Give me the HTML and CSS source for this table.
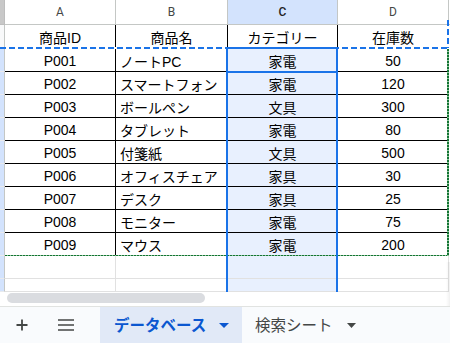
FILE: index.html
```html
<!DOCTYPE html>
<html lang="ja">
<head>
<meta charset="utf-8">
<title>データベース</title>
<link rel="stylesheet" href="styles.css">
</head>
<body>
<div class="app">
  <div class="sheet">
    <div class="grid">
      <div class="corner"></div>
      <div class="ch">A</div>
      <div class="ch">B</div>
      <div class="ch ch-sel">C</div>
      <div class="ch">D</div>
      <div class="ch ch-end"></div>

      <div class="rh rh-top"></div>
      <div class="c">商品ID</div>
      <div class="c">商品名</div>
      <div class="c">カテゴリー</div>
      <div class="c">在庫数</div>
      <div class="fill"></div>

      <div class="rh"></div><div class="c">P001</div><div class="c left">ノートPC</div><div class="c sel">家電</div><div class="c">50</div><div class="fill"></div>
      <div class="rh"></div><div class="c">P002</div><div class="c left">スマートフォン</div><div class="c sel">家電</div><div class="c">120</div><div class="fill"></div>
      <div class="rh"></div><div class="c">P003</div><div class="c left">ボールペン</div><div class="c sel">文具</div><div class="c">300</div><div class="fill"></div>
      <div class="rh"></div><div class="c">P004</div><div class="c left">タブレット</div><div class="c sel">家電</div><div class="c">80</div><div class="fill"></div>
      <div class="rh"></div><div class="c">P005</div><div class="c left">付箋紙</div><div class="c sel">文具</div><div class="c">500</div><div class="fill"></div>
      <div class="rh"></div><div class="c">P006</div><div class="c left">オフィスチェア</div><div class="c sel">家具</div><div class="c">30</div><div class="fill"></div>
      <div class="rh"></div><div class="c">P007</div><div class="c left">デスク</div><div class="c sel">家具</div><div class="c">25</div><div class="fill"></div>
      <div class="rh"></div><div class="c">P008</div><div class="c left">モニター</div><div class="c sel">家電</div><div class="c">75</div><div class="fill"></div>
      <div class="rh"></div><div class="c">P009</div><div class="c left">マウス</div><div class="c sel">家電</div><div class="c">200</div><div class="fill"></div>

      <div class="rh"></div><div class="c e"></div><div class="c e"></div><div class="c e sel"></div><div class="c e"></div><div class="fill"></div>
      <div class="rh"></div><div class="c e"></div><div class="c e"></div><div class="c e sel"></div><div class="c e"></div><div class="fill"></div>
    </div>

    <div class="marq-blue-h"></div>
    <div class="marq-blue-v"></div>
    <div class="marq-green-h"></div>
    <div class="marq-green-v"></div>
    <div class="range"></div>
    <div class="active"></div>
    <div class="edge-shadow"></div>

    <div class="hscroll"><div class="thumb"></div></div>
  </div>

  <div class="tabbar">
    <div class="tbtn">
      <svg width="12" height="12" viewBox="0 0 12 12"><path d="M6 0.5V11.5M0.5 6H11.5" stroke="#444746" stroke-width="1.8" fill="none"/></svg>
    </div>
    <div class="tbtn">
      <svg width="16" height="12" viewBox="0 0 16 12"><path d="M0 1H16M0 6H16M0 11H16" stroke="#444746" stroke-width="1.7" fill="none"/></svg>
    </div>
    <div class="tab tab-active">
      <span class="tab-label">データベース</span>
      <svg class="caret" width="10" height="5" viewBox="0 0 10 5"><polygon points="0,0 10,0 5,5" fill="#0b57d0"/></svg>
    </div>
    <div class="tab">
      <span class="tab-label">検索シート</span>
      <svg class="caret" width="9" height="5" viewBox="0 0 9 5"><polygon points="0,0 9,0 4.5,5" fill="#444746"/></svg>
    </div>
  </div>
</div>
</body>
</html>
```

FILE: styles.css
```css
html, body {
  margin: 0;
  padding: 0;
  background: #ffffff;
}

.app {
  width: 450px;
  height: 343px;
  overflow: hidden;
  display: flex;
  flex-direction: column;
  font-family: "Liberation Sans", "Noto Sans CJK JP", sans-serif;
}

.sheet {
  position: relative;
  height: 306px;
  flex: none;
  background: #ffffff;
}

.grid {
  display: grid;
  grid-template-columns: 5px 111px 112px 110px 111px 1px;
  grid-template-rows: 25px 24px repeat(10, 23px) 13px;
}

.grid > div {
  box-sizing: border-box;
}

.corner {
  background: #c8c8c8;
  border-right: 1px solid #bdbdbd;
  border-bottom: 1px solid #bdbdbd;
}

.ch {
  display: flex;
  align-items: center;
  justify-content: center;
  font-family: "Roboto", "Liberation Sans", sans-serif;
  font-size: 12px;
  color: #444746;
  background: #ffffff;
  border-right: 1px solid #c4c7c5;
  border-bottom: 1px solid #c4c7c5;
}

.ch-sel {
  background: #d3e3fd;
  color: #1f1f1f;
  font-weight: 500;
}

.ch-end {
  border-right: none;
}

.rh {
  background: #d3e3fd;
  border-right: 1px solid #c4c7c5;
  border-bottom: 1px solid #e8eaed;
}

.rh-top {
  background: #f8f9fa;
  border-bottom: 1px solid #c4c7c5;
}

.c {
  display: flex;
  align-items: center;
  justify-content: center;
  padding-top: 1px;
  font-size: 14px;
  color: #000000;
  border-right: 1px solid #000000;
  border-bottom: 1px solid #000000;
  white-space: nowrap;
  overflow: hidden;
}

.c.left {
  justify-content: flex-start;
  padding-left: 4px;
}

.c.sel {
  background: #e8f0fe;
}

.c.e {
  border-right-color: #e1e1e1;
  border-bottom-color: #e1e1e1;
}

.fill {
  background: #ffffff;
}

/* copy marquees and selection, drawn over the grid */
.marq-blue-h {
  position: absolute;
  left: 0;
  top: 47px;
  width: 449px;
  height: 2px;
  background: repeating-linear-gradient(90deg, #1a73e8 0 6px, #ffffff 6px 9px);
}

.marq-blue-v {
  position: absolute;
  left: 447px;
  top: 20px;
  width: 2px;
  height: 28px;
  background: repeating-linear-gradient(180deg, #1a73e8 0 6px, #ffffff 6px 9px);
}

.marq-green-h {
  position: absolute;
  left: 5px;
  top: 255px;
  width: 444px;
  height: 1px;
  background: repeating-linear-gradient(90deg, #137333 0 2px, #8fc79b 2px 3px);
}

.marq-green-v {
  position: absolute;
  left: 447px;
  top: 49px;
  width: 2px;
  height: 207px;
  background: repeating-linear-gradient(180deg, #137333 0 2px, #8fc79b 2px 3px);
}

.range {
  position: absolute;
  left: 226px;
  top: 47px;
  width: 112px;
  height: 245px;
  box-sizing: border-box;
  border: 2px solid #1a73e8;
  border-bottom: none;
}

.active {
  position: absolute;
  left: 226px;
  top: 47px;
  width: 112px;
  height: 26px;
  box-sizing: border-box;
  border: 2px solid #1a73e8;
}

.edge-shadow {
  position: absolute;
  right: 0;
  top: 262px;
  width: 4px;
  height: 44px;
  background: linear-gradient(90deg, rgba(0,0,0,0), rgba(0,0,0,0.06));
}

.hscroll {
  height: 14px;
  padding-top: 1px;
  padding-left: 7px;
  box-sizing: border-box;
}

.thumb {
  width: 198px;
  height: 10px;
  border-radius: 5px;
  background: #dadce0;
}

/* sheet tabs */
.tabbar {
  flex: 1;
  display: flex;
  align-items: stretch;
  background: #f9fbfd;
  border-top: 1px solid #e1e3e1;
  font-family: "Noto Sans CJK JP", sans-serif;
}

.tbtn {
  width: 44px;
  display: flex;
  align-items: center;
  justify-content: center;
}

.tbtn + .tab {
  margin-left: 12px;
}

.tab {
  display: flex;
  align-items: center;
  padding: 0 12px 0 13px;
  gap: 14px;
  font-size: 15.5px;
  color: #444746;
}

.tab-active {
  width: 142px;
  box-sizing: border-box;
  padding-left: 14px;
  gap: 13px;
  background: #e1e9f7;
  color: #0b57d0;
  font-weight: 700;
}

.tab-label {
  white-space: nowrap;
  line-height: 1;
}

.caret {
  flex: none;
}
```
